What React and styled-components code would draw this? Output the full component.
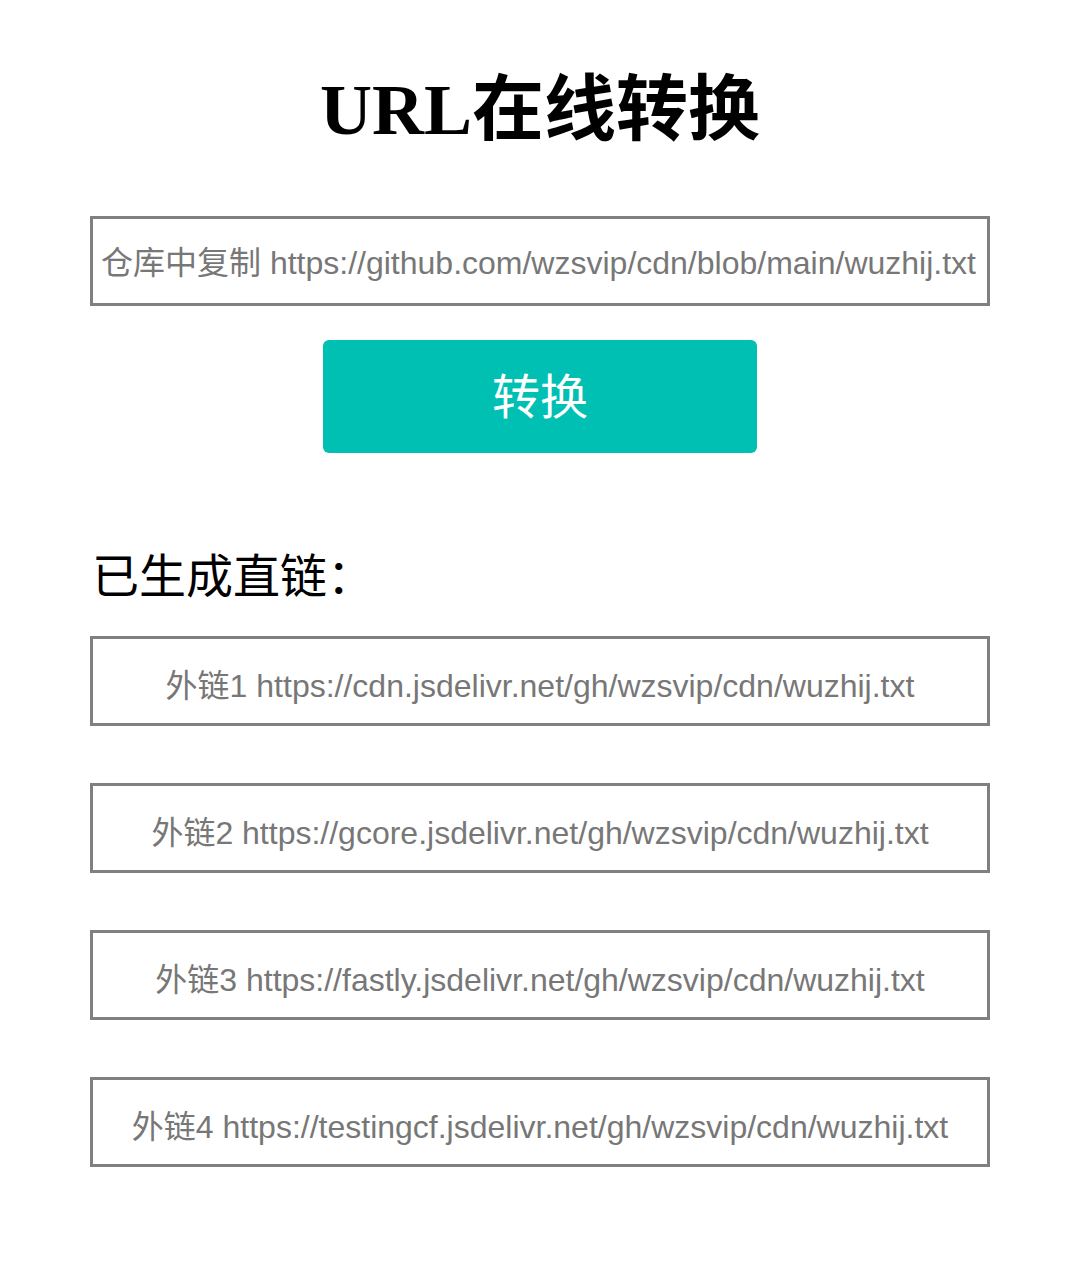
import styled, {createGlobalStyle} from 'styled-components'

const GlobalStyle = createGlobalStyle`
  body {
    margin: 0;
    background: #fff;
    font-family: "Liberation Sans", "Noto Sans CJK SC", sans-serif;
  }
`

const Page = styled.div`
  width: 900px;
  margin: 0 auto;
  padding-top: 60px;
  display: flex;
  flex-direction: column;
`

const Title = styled.h1`
  margin: 0;
  text-align: center;
  font-family: "Liberation Serif", "Noto Sans CJK SC", serif;
  font-weight: 700;
  font-size: 72px;
  line-height: 100px;
  color: #000;
`

const Field = styled.input`
  box-sizing: border-box;
  width: 900px;
  height: 90px;
  border: 3px solid #808080;
  padding: 4px 8px 0;
  font-family: "Liberation Sans", "Noto Sans CJK SC", sans-serif;
  font-size: 32px;
  color: #777;
  text-align: ${(p) => (p.$center ? 'center' : 'left')};
  outline: none;
  background: #fff;

  &::placeholder {
    color: #777;
  }
`

const Source = styled(Field)`
  margin-top: 56px;
`

const ConvertButton = styled.button`
  align-self: center;
  margin-top: 34px;
  width: 434px;
  height: 113px;
  padding: 0 0 8px;
  border: none;
  border-radius: 6px;
  background: #00bfb3;
  color: #fff;
  font-family: "Noto Sans CJK SC", sans-serif;
  font-size: 48px;
  cursor: pointer;
`

const ResultTitle = styled.h2`
  margin: 90px 0 0 2px;
  font-family: "Noto Sans CJK SC", sans-serif;
  font-weight: 400;
  font-size: 47px;
  line-height: 60px;
  color: #000;
`

const Links = styled.div`
  display: flex;
  flex-direction: column;
  gap: 57px;
  margin-top: 33px;
`

const hosts = ['cdn', 'gcore', 'fastly', 'testingcf']

export default function App() {
  return (
    <>
      <GlobalStyle />
      <Page>
        <Title>URL在线转换</Title>
        <Source placeholder="仓库中复制 https://github.com/wzsvip/cdn/blob/main/wuzhij.txt" />
        <ConvertButton>转换</ConvertButton>
        <ResultTitle>已生成直链：</ResultTitle>
        <Links>
          {hosts.map((h, i) => (
            <Field
              key={h}
              $center
              readOnly
              value={`外链${i + 1} https://${h}.jsdelivr.net/gh/wzsvip/cdn/wuzhij.txt`}
            />
          ))}
        </Links>
      </Page>
    </>
  )
}
